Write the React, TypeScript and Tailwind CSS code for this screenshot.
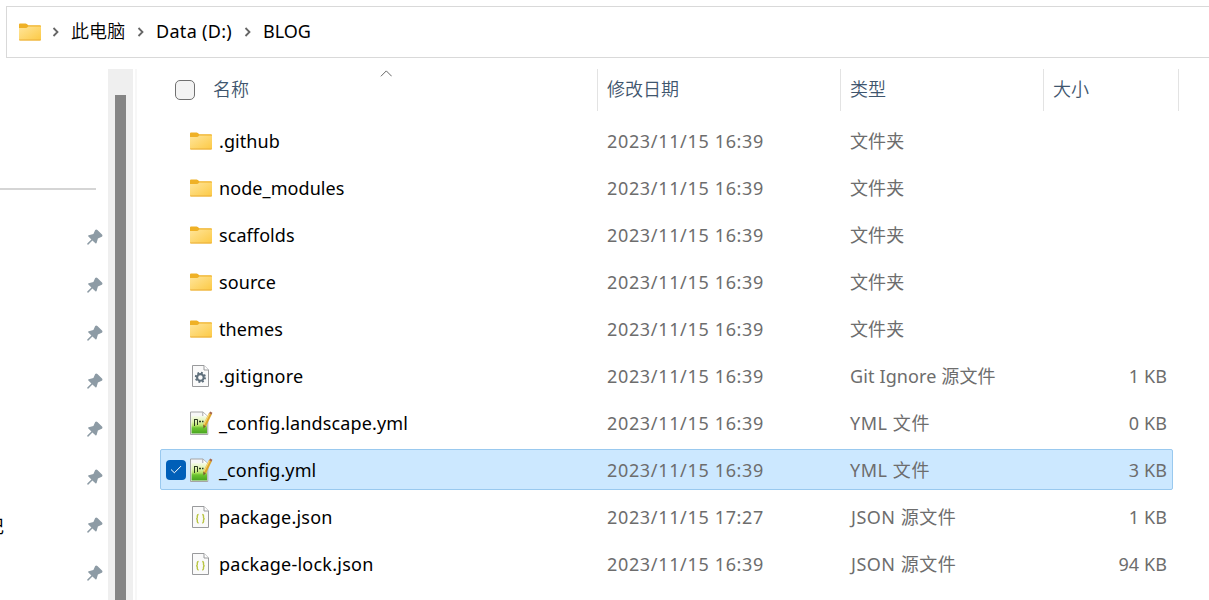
import React from 'react';

type Kind = 'folder' | 'gear' | 'yml' | 'json';

interface Entry {
  name: string;
  kind: Kind;
  date: string;
  type: string;
  size?: string;
  selected?: boolean;
}

const entries: Entry[] = [
  { name: '.github', kind: 'folder', date: '2023/11/15 16:39', type: '文件夹' },
  { name: 'node_modules', kind: 'folder', date: '2023/11/15 16:39', type: '文件夹' },
  { name: 'scaffolds', kind: 'folder', date: '2023/11/15 16:39', type: '文件夹' },
  { name: 'source', kind: 'folder', date: '2023/11/15 16:39', type: '文件夹' },
  { name: 'themes', kind: 'folder', date: '2023/11/15 16:39', type: '文件夹' },
  { name: '.gitignore', kind: 'gear', date: '2023/11/15 16:39', type: 'Git Ignore 源文件', size: '1 KB' },
  { name: '_config.landscape.yml', kind: 'yml', date: '2023/11/15 16:39', type: 'YML 文件', size: '0 KB' },
  { name: '_config.yml', kind: 'yml', date: '2023/11/15 16:39', type: 'YML 文件', size: '3 KB', selected: true },
  { name: 'package.json', kind: 'json', date: '2023/11/15 17:27', type: 'JSON 源文件', size: '1 KB' },
  { name: 'package-lock.json', kind: 'json', date: '2023/11/15 16:39', type: 'JSON 源文件', size: '94 KB' },
];

const nameTracking: Record<Kind, string> = {
  folder: 'tracking-[0.08px]',
  gear: 'tracking-[0.24px]',
  yml: 'tracking-[0.12px]',
  json: 'tracking-[0.24px]',
};

const typeTracking: Record<Kind, string> = {
  folder: 'tracking-[0.1px]',
  gear: 'tracking-[0.12px]',
  yml: 'tracking-[0.55px]',
  json: 'pl-px tracking-[0.5px]',
};

const pins = ['', '', '', '', '', '', '记', ''];

function Folder() {
  return (
    <svg width="22" height="18" viewBox="0 0 22 18" className="block shrink-0">
      <defs>
        <linearGradient id="folder" x1="0" y1="0" x2="1" y2="1">
          <stop offset="0" stopColor="#ffe59a" />
          <stop offset="1" stopColor="#fcc944" />
        </linearGradient>
      </defs>
      <path d="M0 1.5Q0 .5 1 .5H6.6Q7.3 .5 7.8 1L9.3 2.3H21Q22 2.3 22 3.3V8H0Z" fill="#efb126" />
      <path d="M0 5H7.2Q7.8 5 8.2 4.6L9.3 3.5H22V16.5Q22 17.5 21 17.5H1Q0 17.5 0 16.5Z" fill="url(#folder)" />
      <path d="M0 16.5Q0 17.5 1 17.5H21Q22 17.5 22 16.5Z" fill="#e9ae3a" />
    </svg>
  );
}

function Sheet({ children }: { children: React.ReactNode }) {
  return (
    <svg width="22" height="24" viewBox="0 0 22 24" className="block shrink-0">
      <path d="M2.5 1.5H14L18.5 6V22.5H2.5Z" fill="#fafafa" stroke="#999a9c" />
      <path d="M14 1.5V6H18.5" fill="#fff" stroke="#999a9c" />
      {children}
    </svg>
  );
}

function FileIcon({ kind }: { kind: Kind }) {
  if (kind === 'folder') return <Folder />;
  if (kind === 'gear')
    return (
      <Sheet>
        <circle cx="10.4" cy="13.4" r="4.6" fill="none" stroke="#60707c" strokeWidth="2" strokeDasharray="1.81 1.8" />
        <circle cx="10.4" cy="13.4" r="3.3" fill="none" stroke="#60707c" strokeWidth="2.1" />
      </Sheet>
    );
  if (kind === 'json')
    return (
      <Sheet>
        <g fill="none" stroke="#b9c543" strokeWidth="1.4">
          <path d="M8.6 9.5Q7.3 9.5 7.3 10.8V12.5Q7.3 13.7 6.1 13.7Q7.3 13.7 7.3 15V16.6Q7.3 18 8.6 18" />
          <path d="M12.2 9.5Q13.5 9.5 13.5 10.8V12.5Q13.5 13.7 14.7 13.7Q13.5 13.7 13.5 15V16.6Q13.5 18 12.2 18" />
        </g>
      </Sheet>
    );
  return (
    <svg width="24" height="24" viewBox="0 0 24 24" className="-ml-px block shrink-0">
      <defs>
        <linearGradient id="grass" x1="0" y1="0" x2="0" y2="1">
          <stop offset="0" stopColor="#f6fbea" />
          <stop offset=".35" stopColor="#dcf2a8" />
          <stop offset=".55" stopColor="#b5e468" />
          <stop offset=".68" stopColor="#6cc431" />
          <stop offset="1" stopColor="#48a41f" />
        </linearGradient>
      </defs>
      <path d="M1.5 1H14L18.8 5.5V23.5H1.5Z" fill="#f7f7f7" stroke="#a5a5a5" />
      <path d="M13.8 1.2V5.5H18.5" fill="#fff" stroke="#a5a5a5" />
      <rect x="2.5" y="5" width="15.5" height="17.5" fill="url(#grass)" />
      <path d="M5.5 15V8M5 8.5H8.5V14" stroke="#2d3b22" strokeWidth="1" fill="none" />
      <path d="M10 10.5H12M13 10.5H14.5" stroke="#2d3b22" strokeWidth="1.3" />
      <path d="M21.4 2.6L15.6 14.6" stroke="#dda62c" strokeWidth="3.2" />
      <path d="M20.6 2.3L15 13.6" stroke="#f8d775" strokeWidth="1.2" />
      <path d="M20 2.2L21.2 .5L23.4 1.7L22.7 3.6Z" fill="#a8674c" />
      <path d="M14.2 13.8L17 15.3L14.4 17.5Z" fill="#7c6130" />
    </svg>
  );
}

function Chevron() {
  return (
    <svg width="7" height="10" viewBox="0 0 7 10" className="block shrink-0">
      <path d="M1.5 1L5.5 5L1.5 9" fill="none" stroke="#666" strokeWidth="1.8" />
    </svg>
  );
}

function Pin() {
  return (
    <svg width="16" height="16" viewBox="0 0 16 16" className="block shrink-0">
      <path
        d="M8.2 1Q9.3-.2 10.4 1L15 5.5Q16 6.9 14.8 7.7L10.9 9.6L9.6 14Q9.2 14.8 8.4 14.2L5.4 11.4L1.5 15.4Q.7 16 .3 15.3Q0 14.8 .5 14.3L4.4 10.4L1.4 7.6Q.7 6.7 1.7 6.3L6.4 4.9Z"
        fill="#8d9ba5"
      />
    </svg>
  );
}

export default function App() {
  return (
    <div className="flex h-[600px] w-[1209px] flex-col overflow-hidden bg-white pt-1.5 font-['Noto_Sans','Noto_Sans_CJK_SC',sans-serif] text-[18px] leading-6 text-black">
      <header className="ml-1.5 flex h-[52px] shrink-0 items-center border-y border-l border-[#d9d9d9] pb-px">
        <div className="ml-3 flex w-[33px]"><Folder /></div>
        <Chevron />
        <span className="ml-[12px] w-[66px] pb-[3px] font-['Noto_Sans_CJK_SC'] font-[350] tracking-[0.1px]">此电脑</span>
        <Chevron />
        <span className="ml-[12px] w-[88px] pb-0.5 font-[380] tracking-[0.3px] whitespace-nowrap">Data (D:)</span>
        <Chevron />
        <span className="ml-[12px] pb-0.5 font-[380]">BLOG</span>
      </header>

      <div className="flex min-h-0 flex-1 pt-[11px]">
        <aside className="flex w-[108px] shrink-0 flex-col">
          <div className="mt-[119px] h-0.5 w-24 shrink-0 bg-[#d5d5d5]" />
          <div className="mt-[23px] flex flex-col">
            {pins.map((label, i) => (
              <div key={i} className="flex h-12 shrink-0 items-center overflow-hidden pr-[5px]">
                <span className="-ml-[14px] w-[18px] shrink-0 pb-px font-['Noto_Sans_CJK_SC']">{label}</span>
                <div className="ml-auto"><Pin /></div>
              </div>
            ))}
          </div>
        </aside>
        <div className="flex w-[25px] shrink-0 justify-center bg-[#efefef] pt-[26px]">
          <div className="w-[11px] bg-[#858585]" />
        </div>
        <div className="ml-0.5 w-0.5 shrink-0 bg-[#f7f7f7]" />

        <main className="ml-[23px] flex w-[1019px] shrink-0 flex-col">
          <div className="flex h-[42px] shrink-0 font-['Noto_Sans_CJK_SC'] font-[350] text-[#3f566e]">
            <div className="relative flex w-[438px] items-center border-r border-[#e3e3e3] pl-[15px]">
              <span className="h-5 w-5 rounded-[5px] border border-[#707070] bg-[#f3f3f3]" />
              <span className="ml-[18px] pb-1">名称</span>
              <svg width="12" height="7" viewBox="0 0 12 7" className="absolute top-[1px] left-[220px]">
                <path d="M.9 6.3L6.3 .9L11.7 6.3" fill="none" stroke="#666" />
              </svg>
            </div>
            <div className="flex w-[243px] items-center border-r border-[#e3e3e3] pb-1 pl-[9px]">修改日期</div>
            <div className="flex w-[203px] items-center border-r border-[#e3e3e3] pb-1 pl-[9px]">类型</div>
            <div className="flex w-[135px] items-center border-r border-[#e3e3e3] pb-1 pl-[9px]">大小</div>
          </div>

          <div className="mt-[9px] flex w-[1013px] flex-col gap-1.5">
            {entries.map((e) => (
              <div
                key={e.name}
                className={
                  e.selected
                    ? 'flex h-[41px] shrink-0 items-center rounded-[2px] border border-[#99c9ef] bg-[#cce8ff]'
                    : 'flex h-[41px] shrink-0 items-center border border-transparent'
                }
              >
                <div className="ml-[5px] flex w-6 shrink-0">
                  {e.selected && (
                    <span className="flex h-5 w-5 items-center justify-center rounded-[4px] bg-[#005fb8]">
                      <svg width="12" height="9" viewBox="0 0 12 9">
                        <path d="M1 4.5L4.4 7.8L11 1.1" fill="none" stroke="#fff" />
                      </svg>
                    </span>
                  )}
                </div>
                <div className="flex w-[22px] shrink-0"><FileIcon kind={e.kind} /></div>
                <span className={`ml-[7px] w-[388px] font-[380] whitespace-nowrap ${nameTracking[e.kind]}`}>{e.name}</span>
                <span className="w-[243px] font-[380] tracking-[0.66px] whitespace-nowrap text-[#6d6d6d]">{e.date}</span>
                <span className={`w-[203px] font-[380] whitespace-nowrap text-[#6d6d6d] ${typeTracking[e.kind]}`}>{e.type}</span>
                <span className="ml-auto pr-[5px] font-[380] tracking-[0.1px] text-[#6d6d6d]">{e.size}</span>
              </div>
            ))}
          </div>
        </main>
      </div>
    </div>
  );
}
